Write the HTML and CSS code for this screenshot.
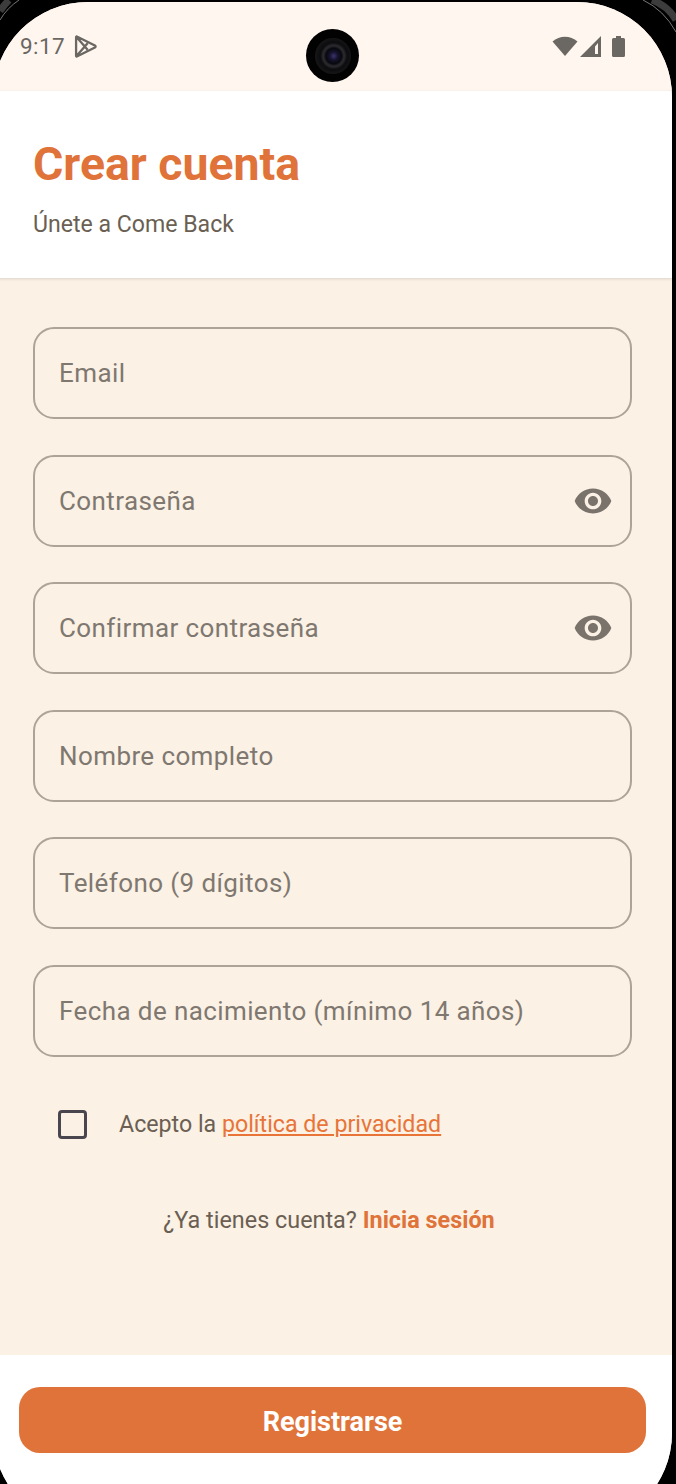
FILE: index.html
```html
<!DOCTYPE html>
<html lang="es">
<head>
    <meta charset="UTF-8">
    <meta name="viewport" content="width=device-width, initial-scale=1.0">
    <title>Crear cuenta</title>
    <link rel="stylesheet" href="styles.css">
</head>
<body>
    <svg class="bezel bezel-left" viewBox="0 0 34 34"><path class="bezel-band" d="M0 11Q4 5 9 0"/><path d="M0 20Q7 8 19 0"/></svg>
    <svg class="bezel bezel-right" viewBox="0 0 34 34"><path class="bezel-band" d="M10 0Q26 6 34 20"/><path d="M1 0Q22 10 34 32"/></svg>

    <div class="screen">
        <!-- Status bar -->
        <div class="status-bar">
            <div class="status-left">
                <span class="clock">9:17</span>
                <svg class="play-icon" viewBox="0 0 22 22">
                    <path d="M2 2.2Q2 1 3.2 1.6L20 10Q21.4 11 20 12L3.2 20.4Q2 21 2 19.8ZM2.4 2L13 14M2.4 20L13 8" />
                </svg>
            </div>
            <div class="camera"><div class="lens"></div></div>
            <div class="status-right">
                <svg class="wifi-icon" viewBox="0 0 26 20"><path d="M0.5 5.5C7.5 -0.8 18.5 -0.8 25.5 5.5L13 20Z"/></svg>
                <svg class="signal-icon" viewBox="0 0 21 21"><path d="M21 0V21H0ZM15 10.5V18H18V7Z" fill-rule="evenodd"/></svg>
                <svg class="battery-icon" viewBox="0 0 13 21"><path d="M4 0H9V2H11.5Q13 2 13 3.5V19.5Q13 21 11.5 21H1.5Q0 21 0 19.5V3.5Q0 2 1.5 2H4Z"/></svg>
            </div>
        </div>

        <!-- Header -->
        <div class="header">
            <h1>Crear cuenta</h1>
            <p>Únete a Come Back</p>
        </div>

        <!-- Form -->
        <form class="form">
            <div class="field">Email</div>
            <div class="field">
                Contraseña
                <svg class="eye-icon" viewBox="0 0 24 24"><path d="M12 4.5C7 4.5 2.73 7.61 1 12c1.73 4.39 6 7.5 11 7.5s9.27-3.11 11-7.5c-1.73-4.39-6-7.5-11-7.5zM12 17c-2.76 0-5-2.24-5-5s2.24-5 5-5 5 2.24 5 5-2.24 5-5 5zm0-8c-1.66 0-3 1.34-3 3s1.34 3 3 3 3-1.34 3-3-1.34-3-3-3z"/></svg>
            </div>
            <div class="field">
                Confirmar contraseña
                <svg class="eye-icon" viewBox="0 0 24 24"><path d="M12 4.5C7 4.5 2.73 7.61 1 12c1.73 4.39 6 7.5 11 7.5s9.27-3.11 11-7.5c-1.73-4.39-6-7.5-11-7.5zM12 17c-2.76 0-5-2.24-5-5s2.24-5 5-5 5 2.24 5 5-2.24 5-5 5zm0-8c-1.66 0-3 1.34-3 3s1.34 3 3 3 3-1.34 3-3-1.34-3-3-3z"/></svg>
            </div>
            <div class="field">Nombre completo</div>
            <div class="field">Teléfono (9 dígitos)</div>
            <div class="field">Fecha de nacimiento (mínimo 14 años)</div>

            <div class="privacy">
                <span class="checkbox"></span>
                <span>Acepto la <a href="#">política de privacidad</a></span>
            </div>

            <p class="login">¿Ya tienes cuenta? <a href="#">Inicia sesión</a></p>
        </form>

        <!-- Bottom button -->
        <div class="bottom-bar">
            <button type="button" class="submit">Registrarse</button>
        </div>
    </div>
</body>
</html>
```

FILE: styles.css
```css
html, body {
    margin: 0;
    height: 1484px;
    overflow: hidden;
    background-color: #000;
}

body {
    position: relative;
    font-family: Roboto, "Liberation Sans", sans-serif;
}

.bezel {
    position: absolute;
    top: 0;
    width: 34px;
    height: 34px;
    fill: none;
    stroke: #777;
    stroke-width: 1;
}

.bezel-band {
    stroke: #3c3c3c;
    stroke-width: 7;
}

.bezel-left {
    left: 0;
}

.bezel-right {
    right: 0;
}

.screen {
    position: relative;
    box-sizing: border-box;
    width: 679px;
    height: 1526px;
    margin: 2px 0 0 -7px;
    padding-left: 7px;
    border-radius: 95px;
    overflow: hidden;
    display: flex;
    flex-direction: column;
    background-color: #fbf1e5;
}

.status-bar {
    height: 89px;
    margin-left: -7px;
    padding: 0 47px 0 27px;
    display: flex;
    justify-content: space-between;
    align-items: flex-start;
    background-color: #fff6f0;
    color: #6b6762;
}

.status-left {
    display: flex;
    align-items: center;
    gap: 9px;
    height: 32px;
    margin-top: 28px;
}

.clock {
    font-size: 22.5px;
    letter-spacing: 0.4px;
}

.play-icon {
    width: 23px;
    height: 23px;
    fill: none;
    stroke: #6b6762;
    stroke-width: 2.2;
    stroke-linejoin: round;
}

.camera {
    position: absolute;
    left: 313px;
    top: 27px;
    width: 53px;
    height: 53px;
    border-radius: 50%;
    background-color: #020203;
    display: flex;
    align-items: center;
    justify-content: center;
}

.lens {
    width: 36px;
    height: 36px;
    border-radius: 50%;
    background: radial-gradient(circle at 52% 50%, #3a3270 0, #14132c 16%, #08080e 30%, #2c2c30 40%, #0c0c0e 52%, #1a1a1c 78%, #060606 100%);
}

.status-right {
    display: flex;
    align-items: flex-start;
    gap: 2px;
    margin-top: 34px;
}

.status-right svg {
    fill: #6b6762;
}

.wifi-icon {
    width: 26px;
    height: 20px;
}

.signal-icon {
    width: 21px;
    height: 21px;
}

.battery-icon {
    width: 13px;
    height: 21px;
    margin-left: 9px;
}

.header {
    height: 187px;
    box-sizing: border-box;
    margin-left: -7px;
    padding: 47px 0 0 40px;
    background-color: #fff;
    box-shadow: 0 1px 3px rgba(0, 0, 0, 0.13);
    position: relative;
}

.header h1 {
    margin: 0;
    font-size: 46.4px;
    line-height: 52px;
    font-weight: 700;
    color: #e07339;
}

.header p {
    margin: 20px 0 0;
    font-size: 23.1px;
    line-height: 30px;
    color: #6b5f53;
}

.form {
    flex: 1;
    padding: 49px 40px 0 33px;
    display: flex;
    flex-direction: column;
    gap: 35.6px;
}

.field {
    height: 92px;
    box-sizing: border-box;
    padding: 0 24px;
    display: flex;
    align-items: center;
    justify-content: space-between;
    border: 2px solid #ada397;
    border-radius: 21px;
    font-size: 26px;
    letter-spacing: 0.4px;
    color: #7f7870;
}

.eye-icon {
    width: 40px;
    height: 40px;
    margin-right: -7px;
    fill: #7a736c;
}

.privacy {
    display: flex;
    align-items: center;
    gap: 32px;
    margin: 17px 0 0 25px;
    font-size: 23.2px;
    color: #6b5f53;
}

.privacy a {
    color: #e87438;
}

.checkbox {
    width: 29px;
    height: 29px;
    box-sizing: border-box;
    border: 3.5px solid #4a4650;
    border-radius: 4px;
}

.login {
    margin: 32px 0 0;
    padding-right: 7px;
    text-align: center;
    font-size: 23.4px;
    color: #6b5f53;
}

.login a {
    color: #e07339;
    font-weight: 700;
    text-decoration: none;
}

.bottom-bar {
    height: 173px;
    box-sizing: border-box;
    margin-left: -7px;
    padding: 32px 26px 0;
    background-color: #fff;
}

.submit {
    display: block;
    width: 100%;
    height: 66px;
    padding: 3px 0 0;
    border: none;
    border-radius: 21px;
    background-color: #e07339;
    color: #fff;
    font-family: inherit;
    font-size: 27px;
    font-weight: 700;
}
```
